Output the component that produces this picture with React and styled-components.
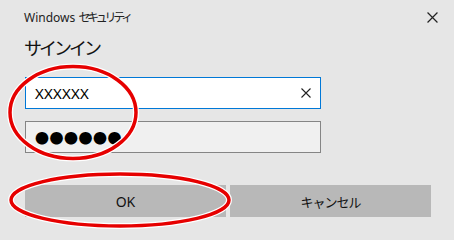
import React from 'react'
import styled, { createGlobalStyle } from 'styled-components'

const GlobalStyle = createGlobalStyle`
  html, body { margin: 0; padding: 0; background: #e6e6e6; }
  * { box-sizing: border-box; }
`

const Dialog = styled.div`
  position: relative;
  width: 454px;
  height: 240px;
  background: #e6e6e6;
  font-family: "Noto Sans", "Noto Sans CJK JP", sans-serif;
  color: #1a1a1a;
  overflow: hidden;
`

const TitleBar = styled.div`
  display: flex;
  justify-content: space-between;
  align-items: center;
  height: 34px;
  padding: 0 16px 0 24px;
`

const WindowTitle = styled.div`
  font-size: 12px;
  color: #222;
`

const Kana = styled.span`
  font-size: ${p => p.size || 12}px;
  letter-spacing: ${p => p.spacing || -3.3}px;
`

const CloseButton = styled.div`
  width: 12px;
  height: 12px;
  display: grid;
  place-content: center;
`

const Heading = styled.div`
  padding-left: 24px;
  margin-top: 2px;
  font-size: 18px;
  letter-spacing: -3px;
  line-height: 24px;
  color: #111;
`

const Form = styled.div`
  display: flex;
  flex-direction: column;
  gap: 12px;
  padding-left: 25px;
  margin-top: 17px;
`

const Field = styled.div`
  width: 296px;
  height: 32px;
  display: flex;
  align-items: center;
  justify-content: space-between;
  padding: 0 9px 0 9px;
  border: 1px solid ${p => (p.focused ? '#0078d7' : '#858585')};
  background: ${p => (p.focused ? '#ffffff' : '#f0f0f0')};
`

const FieldText = styled.span`
  font-size: 15px;
  color: #000;
  letter-spacing: 0.2px;
`

const Dots = styled.span`
  font-family: "Noto Sans CJK JP", sans-serif;
  font-size: 14px;
  letter-spacing: 0.5px;
  color: #000;
  line-height: 1;
`

const Buttons = styled.div`
  display: flex;
  gap: 4px;
  padding-left: 25px;
  margin-top: 32px;
`

const Button = styled.div`
  width: 201px;
  height: 32px;
  background: #b8b8b8;
  display: grid;
  place-content: center;
  font-size: ${p => (p.jp ? '13px' : '14px')};
  letter-spacing: ${p => (p.jp ? '-1px' : '0')};
  color: #111;
`

const Marks = styled.svg`
  position: absolute;
  left: 0;
  top: 0;
  pointer-events: none;
`

const Cross = ({ size = 10 }) => (
  <svg width={size} height={size} viewBox="0 0 10 10">
    <path d="M0.5 0.5 L9.5 9.5 M9.5 0.5 L0.5 9.5" stroke="#222" strokeWidth="1.1" />
  </svg>
)

export default function App() {
  return (
    <>
      <GlobalStyle />
      <Dialog>
        <TitleBar>
          <WindowTitle>Windows <Kana>セキュリティ</Kana></WindowTitle>
          <CloseButton><Cross size={11} /></CloseButton>
        </TitleBar>
        <Heading>サインイン</Heading>
        <Form>
          <Field focused>
            <FieldText>XXXXXX</FieldText>
            <Cross />
          </Field>
          <Field>
            <Dots>●●●●●●</Dots>
          </Field>
        </Form>
        <Buttons>
          <Button>OK</Button>
          <Button jp>キャンセル</Button>
        </Buttons>
        <Marks width="454" height="240">
          <ellipse cx="73" cy="112.5" rx="63" ry="46" fill="none" stroke="#fff" strokeWidth="6" />
          <ellipse cx="73" cy="112.5" rx="63" ry="46" fill="none" stroke="#e60000" strokeWidth="3.5" />
          <ellipse cx="120" cy="200" rx="109" ry="26" fill="none" stroke="#fff" strokeWidth="6" />
          <ellipse cx="120" cy="200" rx="109" ry="26" fill="none" stroke="#e60000" strokeWidth="3.5" />
        </Marks>
      </Dialog>
    </>
  )
}
